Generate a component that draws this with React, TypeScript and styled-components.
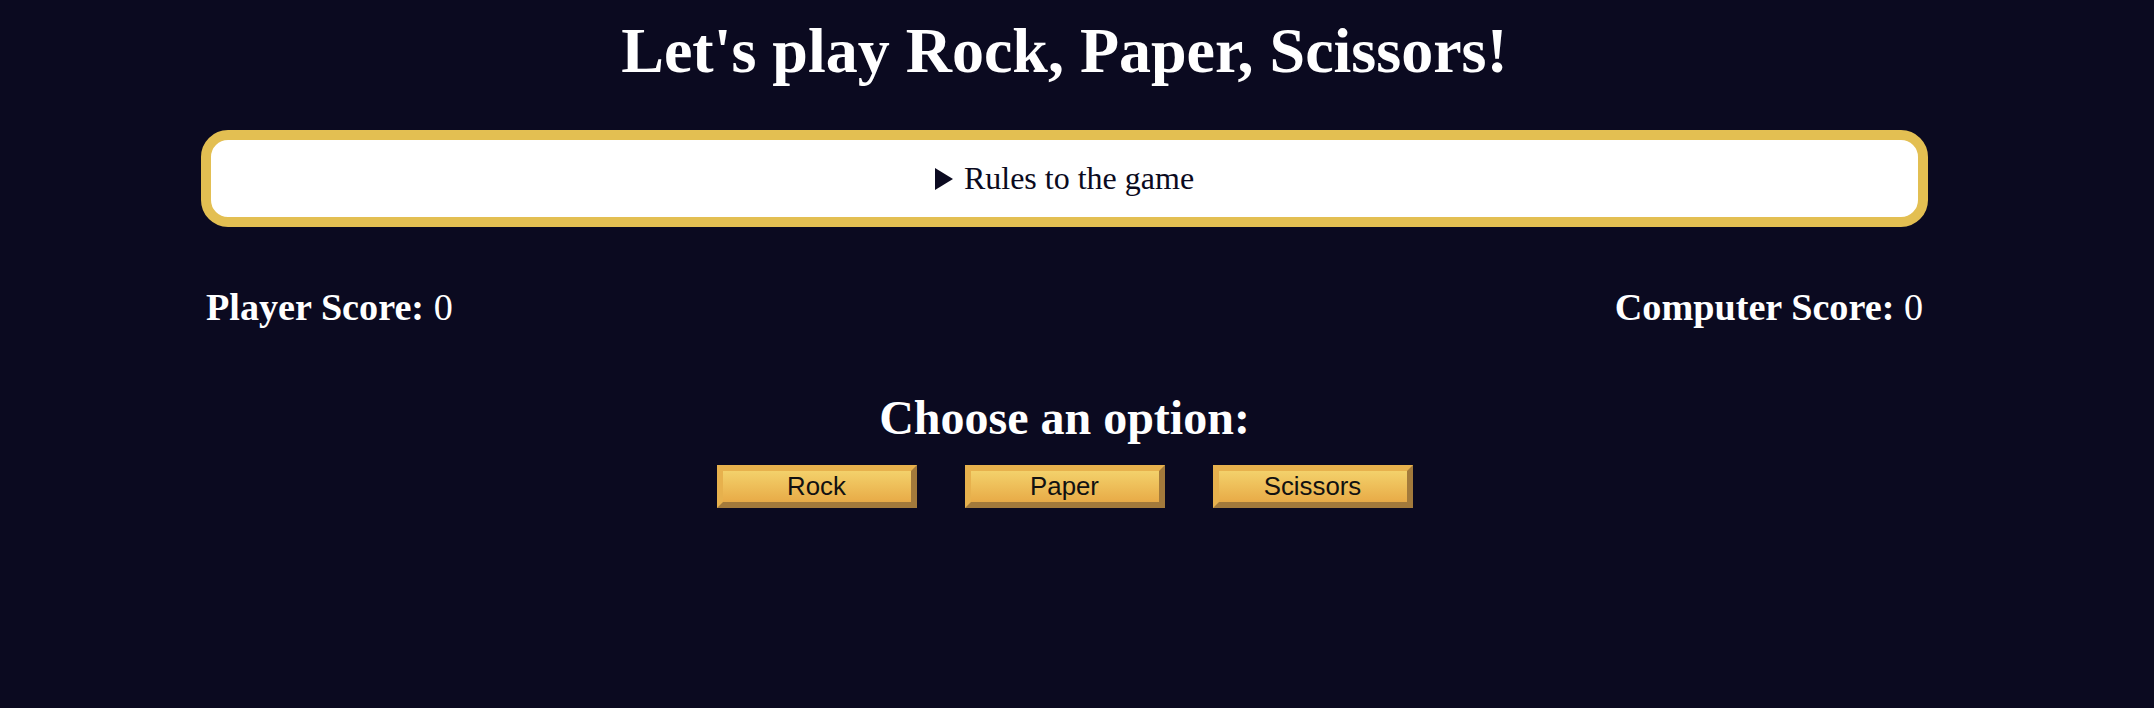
import React from "react";
import styled, { createGlobalStyle } from "styled-components";

const GlobalStyle = createGlobalStyle`
  html, body {
    margin: 0;
    padding: 0;
    background: #0b0a20;
  }
  body {
    font-family: "Liberation Serif", "Times New Roman", serif;
    color: #ffffff;
  }
`;

const Page = styled.main`
  box-sizing: border-box;
  width: 100%;
  padding: 0 25px 0 0;
  display: flex;
  flex-direction: column;
  align-items: center;
`;

const Title = styled.h1`
  margin: 14px 0 0;
  font-size: 64px;
  font-weight: bold;
  line-height: normal;
  color: #ffffff;
  text-align: center;
`;

const Container = styled.div`
  width: 1727px;
  display: flex;
  flex-direction: column;
`;

const Rules = styled.details`
  box-sizing: border-box;
  margin-top: 42px;
  width: 100%;
  height: 97px;
  background: #ffffff;
  border: 10px solid #e3bf52;
  border-radius: 27px;
  color: #0b0a20;
`;

const Summary = styled.summary`
  display: block;
  list-style: none;
  font-size: 32px;
  line-height: 37px;
  padding: 20px 0;
  text-align: center;
  cursor: pointer;
  &::-webkit-details-marker {
    display: none;
  }
  &::before {
    content: "";
    display: inline-block;
    width: 0;
    height: 0;
    border-left: 18px solid #0b0a20;
    border-top: 11px solid transparent;
    border-bottom: 11px solid transparent;
    margin-right: 11px;
    vertical-align: -1px;
  }
`;

const ScoreRow = styled.div`
  margin-top: 58px;
  display: flex;
  justify-content: space-between;
  padding: 0 5px;
  font-size: 38.2px;
  line-height: 44px;
`;

const Score = styled.p`
  margin: 0;
  color: #ffffff;
  b {
    font-weight: bold;
  }
`;

const Subtitle = styled.h2`
  margin: 61px 0 0;
  font-size: 48px;
  font-weight: bold;
  line-height: 55px;
  text-align: center;
`;

const Options = styled.div`
  margin-top: 20px;
  display: flex;
  gap: 48px;
  justify-content: center;
`;

const OptionButton = styled.button`
  box-sizing: border-box;
  width: 200px;
  height: 43px;
  padding: 0;
  font-family: "Liberation Sans", Arial, sans-serif;
  font-size: 25.8px;
  color: #111111;
  background: linear-gradient(to bottom, #f3d16b, #e8ab47);
  border-style: solid;
  border-width: 6px;
  border-color: #e7b14d #a37a3b #a37a3b #e7b14d;
  cursor: pointer;
`;

export default function App() {
  return (
    <>
      <GlobalStyle />
      <Page>
        <Title>Let's play Rock, Paper, Scissors!</Title>
        <Container>
          <Rules>
            <Summary>Rules to the game</Summary>
          </Rules>
          <ScoreRow>
            <Score>
              <b>Player Score:</b> 0
            </Score>
            <Score>
              <b>Computer Score:</b> 0
            </Score>
          </ScoreRow>
          <Subtitle>Choose an option:</Subtitle>
          <Options>
            <OptionButton>Rock</OptionButton>
            <OptionButton>Paper</OptionButton>
            <OptionButton>Scissors</OptionButton>
          </Options>
        </Container>
      </Page>
    </>
  );
}
